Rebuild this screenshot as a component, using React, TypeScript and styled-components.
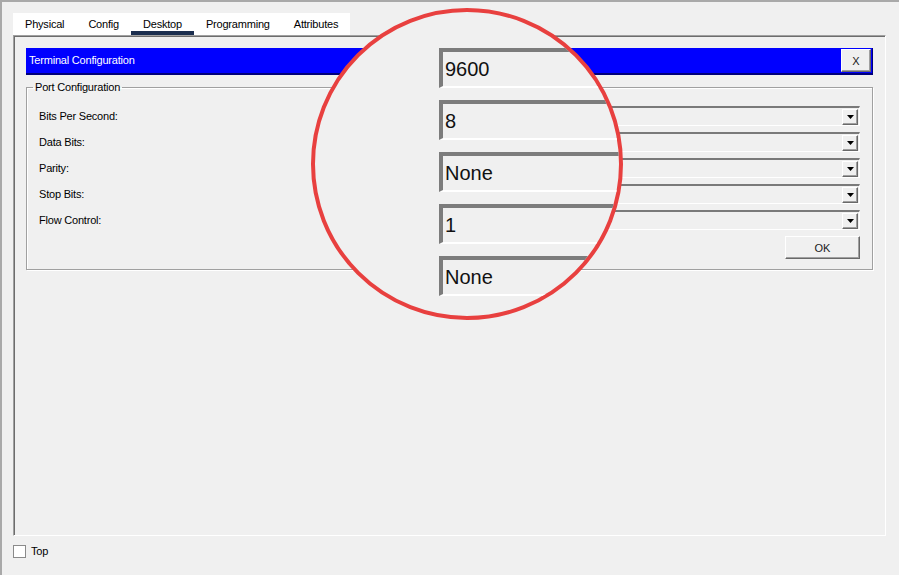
import React from "react";
import styled, { createGlobalStyle } from "styled-components";

const GlobalStyle = createGlobalStyle`
  html, body { margin: 0; padding: 0; background: #f0f0f0; }
  body {
    font-family: "Liberation Sans", Arial, sans-serif;
    font-size: 11px;
    letter-spacing: -0.2px;
    color: #000;
  }
  * { box-sizing: border-box; }
`;

const Window = styled.div`
  position: relative;
  width: 899px;
  height: 575px;
  background: #f0f0f0;
  border-top: 2px solid #a9a9a9;
  border-left: 2px solid #a9a9a9;
  padding: 11px 0 0 11px;
  display: flex;
  flex-direction: column;
  overflow: hidden;
`;

const TabBar = styled.div`
  display: flex;
  align-self: flex-start;
  background: #ffffff;
  height: 22px;
`;

const Tab = styled.div<{ $active?: boolean }>`
  height: 22px;
  padding: 0 12px;
  display: flex;
  align-items: center;
  line-height: 13px;
  color: #000;
  box-shadow: ${(p) => (p.$active ? "inset 0 -4px 0 #1b2e4f" : "none")};
`;

const Panel = styled.div`
  width: 873px;
  height: 501px;
  border-top: 1px solid #a0a0a0;
  border-left: 1px solid #a0a0a0;
  border-right: 1px solid #ffffff;
  border-bottom: 1px solid #ffffff;
  box-shadow: inset 1px 1px 0 #6d6d6d;
  padding: 12px 12px 0 12px;
  display: flex;
  flex-direction: column;
`;

const TitleBar = styled.div`
  height: 27px;
  background: #0000ff;
  border-bottom: 2px solid #00007a;
  border-right: 1px solid #00007a;
  display: flex;
  align-items: center;
  justify-content: space-between;
  padding: 0 1px 0 3px;
  color: #ffffff;
`;

const TitleText = styled.span`
  line-height: 13px;
`;

const RaisedButton = styled.button<{ $w: number; $h: number }>`
  width: ${(p) => p.$w}px;
  height: ${(p) => p.$h}px;
  margin: 0;
  padding: 0;
  background: #f0f0f0;
  border-top: 1px solid #ffffff;
  border-left: 1px solid #ffffff;
  border-right: 1px solid #696969;
  border-bottom: 1px solid #696969;
  box-shadow: inset -1px -1px 0 #a0a0a0;
  font-family: "Liberation Sans", Arial, sans-serif;
  font-size: 11px;
  color: #1a1a1a;
  display: flex;
  align-items: center;
  justify-content: center;
  cursor: default;
`;

const Group = styled.fieldset`
  margin: 6px 0 0 0;
  border: 1px solid #a0a0a0;
  box-shadow: inset 1px 1px 0 #ffffff, 1px 1px 0 #ffffff;
  padding: 12px 12px 10px 12px;
  display: flex;
  flex-direction: column;
  gap: 6px;
`;

const Legend = styled.legend`
  margin-left: -6px;
  padding: 0 2px;
  line-height: 13px;
`;

const Row = styled.div`
  display: grid;
  grid-template-columns: 301px 1fr;
  align-items: center;
  height: 20px;
`;

const Label = styled.span`
  line-height: 13px;
`;

const Combo = styled.div`
  height: 20px;
  border-top: 2px solid #7a7a7a;
  border-left: 2px solid #7a7a7a;
  border-right: 1px solid #ffffff;
  border-bottom: 1px solid #ffffff;
  background: #f0f0f0;
  display: flex;
  justify-content: flex-end;
  align-items: center;
  padding-right: 1px;
`;

const ArrowButton = styled.div`
  width: 16px;
  height: 16px;
  background: #f0f0f0;
  border-top: 1px solid #ffffff;
  border-left: 1px solid #ffffff;
  border-right: 1px solid #696969;
  border-bottom: 1px solid #696969;
  box-shadow: inset -1px -1px 0 #a0a0a0;
  display: flex;
  align-items: center;
  justify-content: center;
`;

const ButtonRow = styled.div`
  display: flex;
  justify-content: flex-end;
`;

const Footer = styled.div`
  margin-top: 9px;
  display: flex;
  align-items: center;
  gap: 5px;
`;

const CheckBox = styled.span`
  width: 13px;
  height: 13px;
  background: #ffffff;
  border: 1px solid #8a8a8a;
  display: inline-block;
`;

const Magnifier = styled.div`
  position: absolute;
  left: 309px;
  top: 6px;
  width: 312px;
  height: 312px;
  border: 4px solid #e8403f;
  border-radius: 50%;
  background: #f0f0f0;
  overflow: hidden;
  padding: 36px 0 0 124px;
  display: flex;
  flex-direction: column;
  gap: 12px;
`;

const MagBox = styled.div`
  flex: none;
  width: 600px;
  height: 40px;
  border-top: 4px solid #7c7c7c;
  border-left: 4px solid #7c7c7c;
  border-bottom: 2px solid #ffffff;
  padding-left: 2px;
  display: flex;
  align-items: center;
  font-size: 20px;
  line-height: 24px;
  letter-spacing: 0;
  color: #111;
`;

const Arrow = () => (
  <svg width="7" height="4" viewBox="0 0 7 4">
    <path d="M0 0H7L3.5 4Z" fill="#000" />
  </svg>
);

const fields = [
  { label: "Bits Per Second:", value: "9600" },
  { label: "Data Bits:", value: "8" },
  { label: "Parity:", value: "None" },
  { label: "Stop Bits:", value: "1" },
  { label: "Flow Control:", value: "None" },
];

const tabs = ["Physical", "Config", "Desktop", "Programming", "Attributes"];

export default function App() {
  return (
    <>
      <GlobalStyle />
      <Window>
        <TabBar>
          {tabs.map((t) => (
            <Tab key={t} $active={t === "Desktop"}>
              {t}
            </Tab>
          ))}
        </TabBar>
        <Panel>
          <TitleBar>
            <TitleText>Terminal Configuration</TitleText>
            <RaisedButton $w={30} $h={23}>X</RaisedButton>
          </TitleBar>
          <Group>
            <Legend>Port Configuration</Legend>
            {fields.map((f) => (
              <Row key={f.label}>
                <Label>{f.label}</Label>
                <Combo>
                  <ArrowButton>
                    <Arrow />
                  </ArrowButton>
                </Combo>
              </Row>
            ))}
            <ButtonRow>
              <RaisedButton $w={75} $h={23}>OK</RaisedButton>
            </ButtonRow>
          </Group>
        </Panel>
        <Footer>
          <CheckBox />
          <Label>Top</Label>
        </Footer>
        <Magnifier>
          {fields.map((f) => (
            <MagBox key={f.label}>{f.value}</MagBox>
          ))}
        </Magnifier>
      </Window>
    </>
  );
}
